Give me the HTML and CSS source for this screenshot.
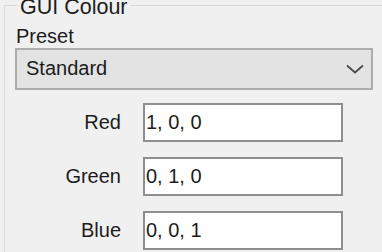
FILE: index.html
```html
<!DOCTYPE html>
<html>
<head>
<meta charset="utf-8">
<link rel="stylesheet" href="styles.css">
</head>
<body>
<fieldset class="group">
  <legend class="group-title">GUI Colour</legend>
  <div class="group-body">
    <div class="field-label">Preset</div>
    <div class="combo">
      <span class="combo-text">Standard</span>
      <svg class="chevron" width="18" height="10" viewBox="0 0 18 10">
        <path d="M1 1.5 L9 8.5 L17 1.5" fill="none" stroke="#4a4a4a" stroke-width="1.8"/>
      </svg>
    </div>
    <div class="rows">
      <div class="row-label">Red</div>
      <div class="textbox">1, 0, 0</div>
      <div class="row-label">Green</div>
      <div class="textbox">0, 1, 0</div>
      <div class="row-label">Blue</div>
      <div class="textbox">0, 0, 1</div>
    </div>
  </div>
</fieldset>
</body>
</html>
```
FILE: styles.css
```css
html, body {
  margin: 0;
  padding: 0;
  background: #f0f0f0;
  overflow: hidden;
  height: 252px;
}
body {
  font-family: "Liberation Sans", Arial, sans-serif;
  font-size: 20px;
  line-height: 23px;
  color: #1c1c1c;
}
.group {
  box-sizing: border-box;
  margin: -8px 0 0 4px;
  padding: 0;
  border: 1px solid #d9d9d9;
  border-right: 0;
  border-bottom: 0;
  height: 260px;
  min-width: 0;
}
.group-title {
  margin-left: 13px;
  padding: 4px 2px 0 2px;
  line-height: 23px;
  font-size: 21.5px;
}
.group-body {
  padding-left: 10px;
}
.field-label {
  margin-top: 6px;
  padding-left: 1px;
}
.combo {
  box-sizing: border-box;
  width: 358px;
  height: 42px;
  border: 2px solid #adadad;
  background: #e3e3e3;
  display: flex;
  align-items: center;
  justify-content: space-between;
  padding: 0 7px 0 9px;
}
.combo-text {
  position: relative;
  top: -1px;
}
.chevron {
  display: block;
}
.rows {
  margin-top: 13px;
  display: grid;
  grid-template-columns: 106px 200px;
  column-gap: 22px;
  grid-auto-rows: 39px;
  row-gap: 15px;
  align-items: center;
}
.row-label {
  text-align: right;
}
.textbox {
  box-sizing: border-box;
  height: 39px;
  border: 2px solid #8e8e8e;
  background: #ffffff;
  display: flex;
  align-items: center;
  padding-left: 1px;
}
```
